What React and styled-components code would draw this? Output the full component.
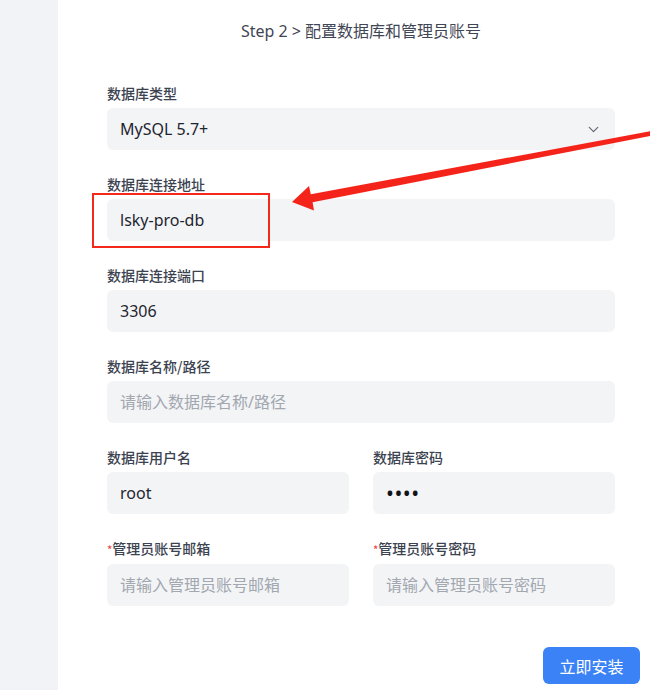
import React from "react";
import styled, { createGlobalStyle } from "styled-components";
import { ChevronDown } from "lucide-react";

const Global = createGlobalStyle`
  html, body { margin: 0; padding: 0; background: #ffffff; }
  body { font-family: "Noto Sans", "Noto Sans CJK SC", sans-serif; }
  * { box-sizing: border-box; }
`;

const Page = styled.div`
  position: relative;
  display: flex;
  width: 650px;
  height: 690px;
  overflow: hidden;
`;

const Sidebar = styled.aside`
  width: 58px;
  flex: none;
  background: #f2f3f6;
`;

const Main = styled.main`
  flex: 1;
  background: #ffffff;
  padding: 20px 0 0 49px;
`;

const Form = styled.div`
  width: 508px;
  display: flex;
  flex-direction: column;
`;

const Title = styled.h2`
  margin: 0 0 41px;
  text-align: center;
  font-size: 16px;
  line-height: 22px;
  font-weight: 400;
  color: #3f4654;
  font-family: "Noto Sans", "Noto Sans CJK SC", sans-serif;
`;

const Fields = styled.div`
  display: grid;
  grid-template-columns: 1fr 1fr;
  column-gap: 24px;
  row-gap: 24px;
`;

const Field = styled.div`
  grid-column: ${(p) => (p.$half ? "span 1" : "span 2")};
  display: flex;
  flex-direction: column;
  gap: 5px;
`;

const Label = styled.label`
  font-size: 14px;
  line-height: 20px;
  font-weight: 500;
  color: #3b4250;
  font-family: "Noto Sans CJK SC", sans-serif;
`;

const Required = styled.span`
  color: #ef4444;
  font-size: 11px;
`;

const Input = styled.input`
  height: 42px;
  width: 100%;
  border: none;
  outline: none;
  border-radius: 6px;
  background: #f3f4f6;
  padding: 0 13px;
  font-size: 16px;
  color: #1f2530;
  font-family: "Noto Sans", "Noto Sans CJK SC", sans-serif;
  &::placeholder {
    color: #a2a7b0;
  }
  &[type="password"] {
    font-size: 21px;
    letter-spacing: 0.5px;
    color: #111318;
  }
`;

const SelectBox = styled.div`
  height: 42px;
  border-radius: 6px;
  background: #f3f4f6;
  padding: 0 13px 0 13px;
  display: flex;
  align-items: center;
  justify-content: space-between;
  font-size: 16px;
  color: #1f2530;
  svg { color: #5f6673; }
`;

const Actions = styled.div`
  display: flex;
  justify-content: flex-end;
  margin: 41px -25px 0 0;
`;

const Button = styled.button`
  width: 97px;
  height: 37px;
  border: none;
  border-radius: 6px;
  background: #3b82f6;
  color: #ffffff;
  font-size: 16px;
  font-family: "Noto Sans CJK SC", sans-serif;
  cursor: pointer;
`;

const Annotation = styled.svg`
  position: absolute;
  left: 0;
  top: 0;
  width: 650px;
  height: 690px;
  pointer-events: none;
`;

export default function App() {
  return (
    <>
      <Global />
      <Page>
        <Sidebar />
        <Main>
          <Form>
            <Title>Step 2 &gt; 配置数据库和管理员账号</Title>
            <Fields>
              <Field>
                <Label>数据库类型</Label>
                <SelectBox>
                  <span>MySQL 5.7+</span>
                  <ChevronDown size={17} strokeWidth={1.7} />
                </SelectBox>
              </Field>
              <Field>
                <Label>数据库连接地址</Label>
                <Input defaultValue="lsky-pro-db" />
              </Field>
              <Field>
                <Label>数据库连接端口</Label>
                <Input defaultValue="3306" />
              </Field>
              <Field>
                <Label>数据库名称/路径</Label>
                <Input placeholder="请输入数据库名称/路径" />
              </Field>
              <Field $half>
                <Label>数据库用户名</Label>
                <Input defaultValue="root" />
              </Field>
              <Field $half>
                <Label>数据库密码</Label>
                <Input type="password" defaultValue="root" />
              </Field>
              <Field $half>
                <Label>
                  <Required>*</Required>管理员账号邮箱
                </Label>
                <Input placeholder="请输入管理员账号邮箱" />
              </Field>
              <Field $half>
                <Label>
                  <Required>*</Required>管理员账号密码
                </Label>
                <Input placeholder="请输入管理员账号密码" />
              </Field>
            </Fields>
            <Actions>
              <Button>立即安装</Button>
            </Actions>
          </Form>
        </Main>
        <Annotation viewBox="0 0 650 690">
          <rect x="93" y="194" width="176" height="53" fill="none" stroke="#f5281c" strokeWidth="2" />
          <polygon
            points="652,131 652,135.5 312.6,202.2 314,210.5 292,202 309,186 310.8,194.2"
            fill="#f5241a"
          />
        </Annotation>
      </Page>
    </>
  );
}
